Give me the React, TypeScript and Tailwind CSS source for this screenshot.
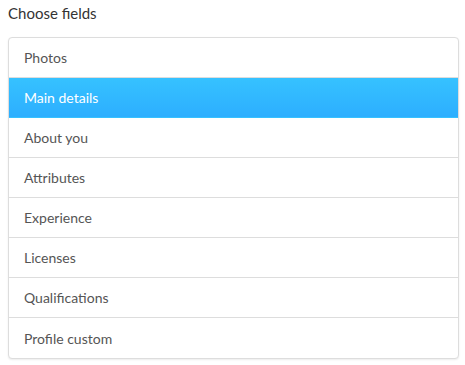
import React, { useState } from 'react';

const FIELDS = [
  'Photos',
  'Main details',
  'About you',
  'Attributes',
  'Experience',
  'Licenses',
  'Qualifications',
  'Profile custom',
];

const App = () => {
  const [active, setActive] = useState(1);

  return (
    <div className="w-[465px] h-[365px] bg-white px-2 pt-[3px]" style={{ fontFamily: 'Lato, "Open Sans", sans-serif' }}>
      <h4 className="text-[15px] leading-[20px] text-[#333] mb-[14px]">Choose fields</h4>
      <div className="w-[451px] border border-[#dddddd] rounded-[4px] bg-white shadow-[0_1px_2px_rgba(0,0,0,0.08)] overflow-hidden">
        {FIELDS.map((f, i) => {
          const isActive = i === active;
          const isLast = i === FIELDS.length - 1;
          return (
            <div
              key={f}
              onClick={() => setActive(i)}
              className={
                'h-[40px] flex items-center px-[15px] text-[14px] cursor-pointer ' +
                (isLast ? '' : 'border-b ') +
                (isActive
                  ? 'bg-gradient-to-b from-[#36c2ff] to-[#2daeff] text-white border-transparent'
                  : 'text-[#555] border-[#dddddd]')
              }
            >
              {f}
            </div>
          );
        })}
      </div>
    </div>
  );
};

export default App;
